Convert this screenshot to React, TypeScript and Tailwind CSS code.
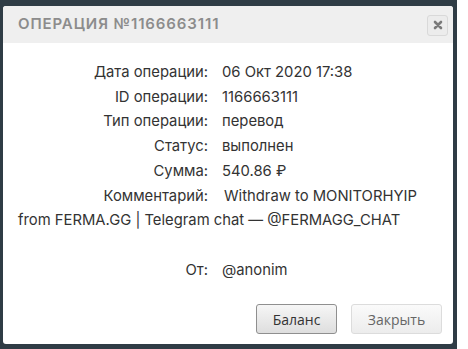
import React from "react";

const rows: [string, string][] = [
  ["Дата операции:", "06 Окт 2020 17:38"],
  ["ID операции:", "1166663111"],
  ["Тип операции:", "перевод"],
  ["Статус:", "выполнен"],
  ["Сумма:", "540.86 ₽"],
];

export default function App() {
  return (
    <div className="w-[468px] h-[349px] bg-white flex">
      <div className="w-[457px] h-[349px] bg-[#2f3c45] pt-[6px] pl-[3px]">
        <div className="w-[450px] h-[338px] bg-white rounded-[3px] flex flex-col overflow-hidden">
          <div className="h-[37px] bg-[#efefef] flex items-center justify-between pl-[15px] pr-[5px]">
            <span
              className="text-[#8c8c8c] text-[15px] font-semibold tracking-[0.9px]"
              style={{ fontFamily: "Inter, 'Noto Sans', sans-serif" }}
            >
              ОПЕРАЦИЯ №1166663111
            </span>
            <button className="w-[21px] h-[21px] mt-[1px] rounded-[3px] border border-[#d9d9d9] bg-[#ececec] flex items-center justify-center">
              <svg width="10" height="10" viewBox="0 0 10 10">
                <path d="M2 2 L8 8 M8 2 L2 8" stroke="#7a7a7a" strokeWidth="2.6" strokeLinecap="round" />
              </svg>
            </button>
          </div>
          <div
            className="pt-[17px] pl-[15px] pr-[22px] text-[14.8px] leading-[24.7px] text-[#333]"
            style={{ fontFamily: "Inter, 'Noto Sans', sans-serif" }}
          >
            {rows.map(([l, v]) => (
              <div key={l}>
                <span className="inline-block w-[204px] text-right pr-[14px]">{l}</span>
                <span>{v}</span>
              </div>
            ))}
            <div>
              <span className="inline-block w-[204px] text-right pr-[14px]">Комментарий:</span>
              <span className="pl-[2px]">Withdraw to MONITORHYIP from FERMA.GG | Telegram chat — @FERMAGG_CHAT</span>
            </div>
            <div className="h-[24.7px]" />
            <div>
              <span className="inline-block w-[204px] text-right pr-[14px]">От:</span>
              <span>@anonim</span>
            </div>
          </div>
          <div
            className="mt-auto mb-[10px] flex justify-end gap-[14px] pr-[11px]"
            style={{ fontFamily: "'Open Sans', 'Noto Sans', sans-serif" }}
          >
            <button className="w-[81px] h-[30px] rounded-[3px] border border-[#8f8f8f] bg-gradient-to-b from-[#f6f6f6] to-[#dedede] text-[14px] text-[#333]">
              Баланс
            </button>
            <button className="w-[91px] h-[30px] rounded-[3px] border border-[#dcdcdc] bg-gradient-to-b from-[#fafafa] to-[#ececec] text-[14px] text-[#666]">
              Закрыть
            </button>
          </div>
        </div>
      </div>
    </div>
  );
}
